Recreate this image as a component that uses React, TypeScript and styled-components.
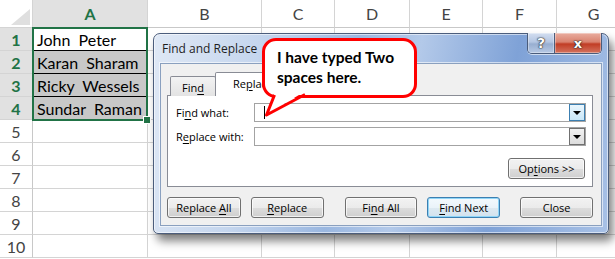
import { Fragment } from "react";
import styled, { createGlobalStyle, css } from "styled-components";

const GlobalStyle = createGlobalStyle`
  html, body {
    margin: 0;
    padding: 0;
    background: #fff;
  }
  body {
    width: 615px;
    height: 259px;
    overflow: hidden;
    font-family: "Liberation Sans", Arial, sans-serif;
  }
`;

const COLS = ["A", "B", "C", "D", "E", "F", "G"];
const NAMES = ["John  Peter", "Karan  Sharam", "Ricky  Wessels", "Sundar  Raman"];
const GREEN = "#217346";

const Stage = styled.div`
  position: relative;
  width: 615px;
  height: 259px;
  overflow: hidden;
  background: #fff;
`;

/* ---------- spreadsheet ---------- */

const Sheet = styled.div`
  position: relative;
  display: grid;
  grid-template-columns: 33px 115px 114px 73px 75px 73px 74px 74px;
  grid-template-rows: 28px repeat(10, 23px);
  font-family: "Lato", "Liberation Sans", sans-serif;
  font-size: 16px;
  color: #000;
`;

const Corner = styled.div`
  position: relative;
  box-sizing: border-box;
  border-right: 1px solid #d4d4d4;
  border-bottom: 1px solid #d4d4d4;
  background: #fff;

  &::after {
    content: "";
    position: absolute;
    right: 2px;
    bottom: 2px;
    border-left: 19px solid transparent;
    border-bottom: 16px solid #dfdfdf;
  }
`;

const ColHead = styled.div<{ $active?: boolean }>`
  box-sizing: border-box;
  display: flex;
  align-items: center;
  justify-content: center;
  border-right: 1px solid #d4d4d4;
  border-bottom: 1px solid #c8c8c8;
  color: #444;
  background: #fff;
  ${({ $active }) =>
    $active &&
    css`
      background: #e1e1e1;
      color: ${GREEN};
      font-weight: bold;
    `}
`;

const RowHead = styled.div<{ $active?: boolean }>`
  box-sizing: border-box;
  display: flex;
  align-items: center;
  justify-content: center;
  border-right: 1px solid #c8c8c8;
  border-bottom: 1px solid #d4d4d4;
  color: #444;
  background: #fff;
  ${({ $active }) =>
    $active &&
    css`
      background: #e1e1e1;
      color: ${GREEN};
      font-weight: bold;
    `}
`;

const Cell = styled.div<{ $shaded?: boolean; $ruled?: boolean }>`
  box-sizing: border-box;
  display: flex;
  align-items: center;
  padding-left: 4px;
  white-space: pre;
  overflow: hidden;
  border-right: 1px solid #d4d4d4;
  border-bottom: 1px solid ${({ $ruled }) => ($ruled ? "#000" : "#d4d4d4")};
  background: ${({ $shaded }) => ($shaded ? "#c8c8c8" : "#fff")};
`;

const Selection = styled.div`
  position: absolute;
  left: 32px;
  top: 27px;
  width: 116px;
  height: 94px;
  box-sizing: border-box;
  border: 2px solid ${GREEN};
  pointer-events: none;

  &::after {
    content: "";
    position: absolute;
    right: -5px;
    bottom: -5px;
    width: 6px;
    height: 6px;
    background: ${GREEN};
    border: 1px solid #fff;
  }
`;

/* ---------- dialog ---------- */

const Dialog = styled.div`
  position: absolute;
  z-index: 1;
  left: 153px;
  top: 33px;
  width: 456px;
  height: 201px;
  box-sizing: border-box;
  display: flex;
  flex-direction: column;
  padding: 0 6px 7px 6px;
  border: 1px solid #4b5d7c;
  border-radius: 7px 7px 5px 5px;
  background: linear-gradient(
    100deg,
    #dfe8f5 0%,
    #c5d6ee 22%,
    #9ab7e0 42%,
    #b3c9e9 55%,
    #7fa2d7 75%,
    #a8c1e6 100%
  );
  box-shadow: inset 0 0 0 1px rgba(255, 255, 255, 0.55), 4px 7px 10px rgba(0, 0, 0, 0.5);
  font-family: "Open Sans", "Noto Sans", sans-serif;
  font-size: 11px;
  color: #000;
`;

const TitleBar = styled.div`
  position: relative;
  height: 29px;
  display: flex;
  align-items: center;
  padding: 0 0 0 2px;
  font-size: 12px;
  color: #1e1e1e;
`;

const CaptionGroup = styled.div`
  position: absolute;
  top: -1px;
  right: 0;
  display: flex;
  border: 1px solid #4a5c7b;
  border-top: none;
  border-radius: 0 0 5px 5px;
  overflow: hidden;
  box-shadow: 0 1px 0 rgba(255, 255, 255, 0.6);
`;

const CaptionButton = styled.div<{ $close?: boolean }>`
  height: 20px;
  width: ${({ $close }) => ($close ? "46px" : "26px")};
  display: flex;
  align-items: center;
  justify-content: center;
  font-family: "DejaVu Sans", sans-serif;
  font-weight: bold;
  font-size: ${({ $close }) => ($close ? "13px" : "14px")};
  color: #fff;
  text-shadow: 0 0 1px #222, 0 0 2px #333, 0 0 1px #222;
  background: ${({ $close }) =>
    $close
      ? "linear-gradient(#e9ad9f 0%, #d9826f 45%, #c13d25 55%, #d4735f 100%)"
      : "linear-gradient(#d3def0 0%, #b4c6e2 45%, #98aed0 55%, #b7c9e4 100%)"};
  border-left: ${({ $close }) => ($close ? "1px solid #4a5c7b" : "none")};
  box-shadow: inset 0 0 0 1px rgba(255, 255, 255, 0.35);
`;

const Client = styled.div`
  flex: 1;
  display: flex;
  flex-direction: column;
  padding: 8px 8px 0 6px;
  background: #f0f0f0;
  border: 1px solid #8aa0bf;
  box-shadow: 0 0 0 1px rgba(255, 255, 255, 0.6);
`;

const TabStrip = styled.div`
  display: flex;
  align-items: flex-end;
  height: 24px;
  padding-left: 3px;
  margin-bottom: -1px;
  position: relative;
  z-index: 1;
`;

const Tab = styled.div<{ $selected?: boolean }>`
  box-sizing: border-box;
  display: flex;
  align-items: center;
  justify-content: center;
  border: 1px solid #898c95;
  border-bottom: none;
  border-radius: 2px 2px 0 0;
  ${({ $selected }) =>
    $selected
      ? css`
          height: 24px;
          width: 76px;
          margin-left: -1px;
          background: #fff;
          padding-bottom: 2px;
        `
      : css`
          height: 20px;
          width: 46px;
          background: linear-gradient(#f3f3f3, #e3e3e3);
          padding-top: 1px;
        `}
`;

const Key = styled.span`
  text-decoration: underline;
  text-underline-offset: 2px;
`;

const Panel = styled.div`
  height: 92px;
  box-sizing: border-box;
  border: 1px solid #898c95;
  background: #fff;
  padding: 7px 6px 0 8px;
  display: flex;
  flex-direction: column;
`;

const FieldRow = styled.div`
  display: grid;
  grid-template-columns: 78px 1fr;
  align-items: center;
  height: 19px;
  margin-bottom: 5px;
`;

const Combo = styled.div`
  position: relative;
  height: 19px;
  box-sizing: border-box;
  border: 1px solid #a3a3a3;
  background: #fff;
  display: flex;
  align-items: center;
`;

const Caret = styled.span`
  width: 1px;
  height: 13px;
  margin-left: 9px;
  background: #000;
`;

const DropButton = styled.div<{ $focused?: boolean }>`
  position: absolute;
  top: 0;
  right: 0;
  width: 16px;
  height: 17px;
  box-sizing: border-box;
  display: flex;
  align-items: center;
  justify-content: center;
  ${({ $focused }) =>
    $focused
      ? css`
          border: 1px solid #3c7fb1;
          background: linear-gradient(#eaf6fd, #c9e7f8);
        `
      : css`
          border: 1px solid #707070;
          background: linear-gradient(#f2f2f2, #dcdcdc);
        `}

  &::after {
    content: "";
    border-left: 4px solid transparent;
    border-right: 4px solid transparent;
    border-top: 4px solid #000;
    margin-top: 1px;
  }
`;

const OptionsRow = styled.div`
  display: flex;
  justify-content: flex-end;
  margin-top: 7px;
  padding-right: 1px;
`;

const Button = styled.div<{ $width?: number; $focused?: boolean; $gap?: number }>`
  box-sizing: border-box;
  height: 21px;
  width: ${({ $width }) => $width ?? 74}px;
  margin-left: ${({ $gap }) => $gap ?? 0}px;
  display: flex;
  align-items: center;
  justify-content: center;
  border: 1px solid #707070;
  border-radius: 3px;
  background: linear-gradient(#f2f2f2 0%, #ebebeb 50%, #dddddd 51%, #cfcfcf 100%);
  box-shadow: inset 0 0 0 1px rgba(255, 255, 255, 0.7);
  white-space: pre;
  ${({ $focused }) =>
    $focused &&
    css`
      border-color: #3c7fb1;
      background: linear-gradient(#f3f9fd 0%, #eaf3f9 50%, #dde9f1 51%, #d2e2ee 100%);
      box-shadow: inset 0 0 0 1px #8fd5f7;
    `}
`;

const ButtonRow = styled.div`
  display: flex;
  margin-top: 10px;
`;

/* ---------- callout ---------- */

const Callout = styled.div`
  position: absolute;
  z-index: 2;
  left: 262px;
  top: 38px;
  width: 155px;
  height: 60px;
  box-sizing: border-box;
  border: 3px solid #ff0000;
  border-radius: 14px;
  background: #fff;
  padding: 6px 0 0 12px;
  font-family: "Lato", "Liberation Sans", sans-serif;
  font-weight: bold;
  font-size: 15.5px;
  line-height: 20px;
  color: #000;
`;

const CalloutTail = styled.svg`
  position: absolute;
  z-index: 3;
  left: 262px;
  top: 90px;
  overflow: visible;
`;

export default function App() {
  return (
    <Stage>
      <GlobalStyle />
      <Sheet>
        <Corner />
        {COLS.map((c) => (
          <ColHead key={c} $active={c === "A"}>
            {c}
          </ColHead>
        ))}
        {Array.from({ length: 10 }, (_, i) => (
          <Fragment key={i}>
            <RowHead $active={i < 4}>{i + 1}</RowHead>
            {COLS.map((c, j) =>
              j === 0 ? (
                <Cell key={c} $shaded={i > 0 && i < 4} $ruled={i < 3}>
                  {NAMES[i] ?? ""}
                </Cell>
              ) : (
                <Cell key={c} />
              )
            )}
          </Fragment>
        ))}
        <Selection />
      </Sheet>

      <Dialog>
        <TitleBar>
          Find and Replace
          <CaptionGroup>
            <CaptionButton>?</CaptionButton>
            <CaptionButton $close>x</CaptionButton>
          </CaptionGroup>
        </TitleBar>
        <Client>
          <TabStrip>
            <Tab>
              Fin<Key>d</Key>
            </Tab>
            <Tab $selected>
              Re<Key>p</Key>lace
            </Tab>
          </TabStrip>
          <Panel>
            <FieldRow>
              <span>
                Fi<Key>n</Key>d what:
              </span>
              <Combo>
                <Caret />
                <DropButton $focused />
              </Combo>
            </FieldRow>
            <FieldRow>
              <span>
                R<Key>e</Key>place with:
              </span>
              <Combo>
                <DropButton />
              </Combo>
            </FieldRow>
            <OptionsRow>
              <Button $width={77}>
                Op<Key>t</Key>ions {">>"}
              </Button>
            </OptionsRow>
          </Panel>
          <ButtonRow>
            <Button>
              Replace <Key>A</Key>ll
            </Button>
            <Button $gap={10} $width={73}>
              <Key>R</Key>eplace
            </Button>
            <Button $gap={21} $width={73}>
              Fi<Key>n</Key>d All
            </Button>
            <Button $gap={10} $width={73} $focused>
              <Key>F</Key>ind Next
            </Button>
            <Button $gap={20} $width={73}>
              Close
            </Button>
          </ButtonRow>
        </Client>
      </Dialog>

      <Callout>
        I have typed Two
        <br />
        spaces here.
      </Callout>
      <CalloutTail width="45" height="28" viewBox="0 0 45 28">
        <polygon points="13,2 42,2 5,24" fill="#fff" />
        <path
          d="M12.5,5 L4.5,25 L43,4.5"
          fill="none"
          stroke="#ff0000"
          strokeWidth="3"
          strokeLinejoin="round"
        />
      </CalloutTail>
    </Stage>
  );
}
